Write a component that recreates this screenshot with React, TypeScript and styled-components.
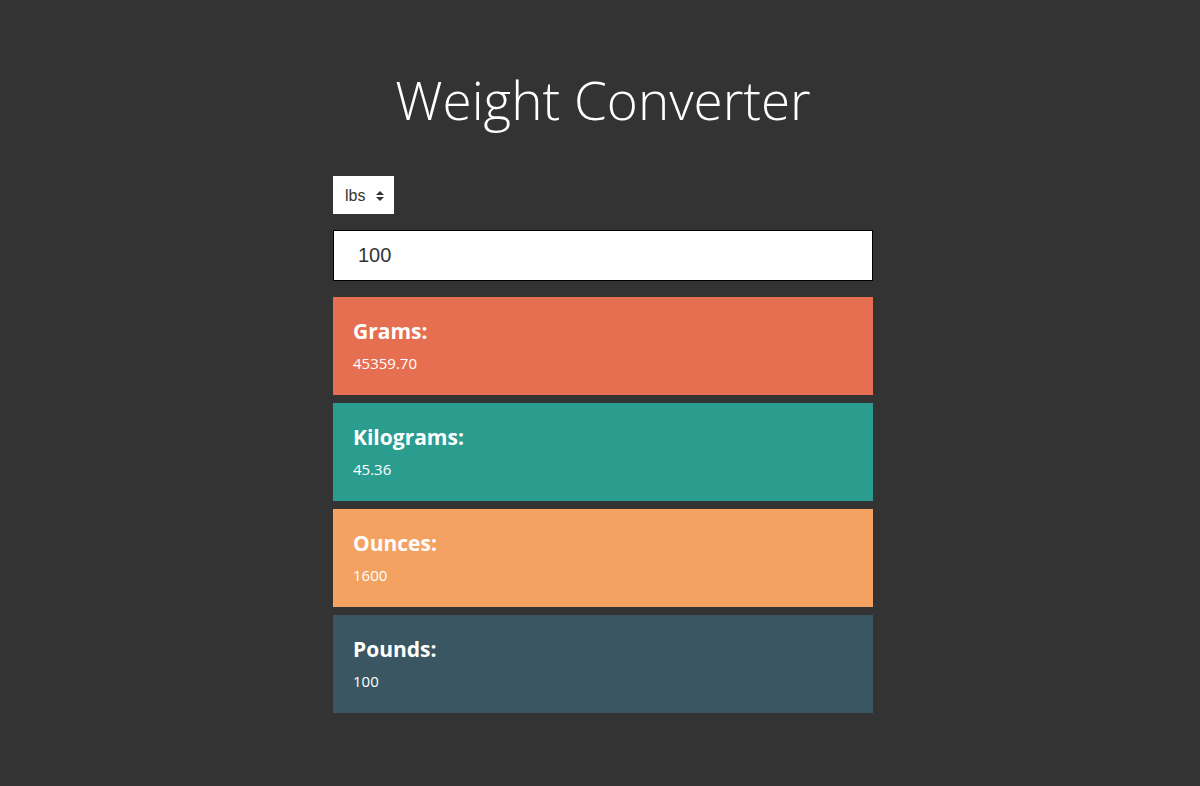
import React, { useState } from "react";
import styled, { createGlobalStyle } from "styled-components";

const Global = createGlobalStyle`
  html, body { margin: 0; padding: 0; background: #333333; }
  body { font-family: "Open Sans", "Noto Sans", sans-serif; color: #fff; }
`;

const Root = styled.div`
  padding-left: 6px;
`;

const Page = styled.div`
  width: 540px;
  margin: 0 auto;
  padding-top: 62px;
  display: flex;
  flex-direction: column;
`;

const Title = styled.h1`
  margin: 0 0 38px;
  text-align: center;
  font-family: "Open Sans", sans-serif;
  font-weight: 300;
  font-size: 53px;
  line-height: 76px;
  color: #fff;
`;

const SelectWrap = styled.div`
  position: relative;
  width: 61px;
  height: 38px;
  background: #fff;
  margin-bottom: 16px;
`;

const Select = styled.select`
  appearance: none;
  width: 100%;
  height: 100%;
  border: none;
  background: transparent;
  padding: 0 0 0 12px;
  font-family: "Liberation Sans", Arial, sans-serif;
  font-size: 16px;
  color: #333;
  outline: none;
`;

const Arrows = styled.svg`
  position: absolute;
  right: 10px;
  top: 15px;
  pointer-events: none;
`;

const Input = styled.input`
  box-sizing: border-box;
  width: 540px;
  height: 51px;
  border: 1px solid #000;
  padding: 0 24px;
  font-family: "Liberation Sans", Arial, sans-serif;
  font-size: 20px;
  color: #333;
  outline: none;
  margin-bottom: 16px;
`;

const Cards = styled.div`
  display: flex;
  flex-direction: column;
  gap: 8px;
`;

const Card = styled.div<{ $bg: string }>`
  box-sizing: border-box;
  height: 98px;
  background: ${(p) => p.$bg};
  padding: 18px 20px;
`;

const CardTitle = styled.h4`
  margin: 0;
  font-family: "Open Sans", sans-serif;
  font-weight: 700;
  font-size: 21px;
  line-height: 32px;
  color: #fff;
`;

const CardValue = styled.div`
  margin-top: 6px;
  font-family: "Open Sans", sans-serif;
  font-size: 15px;
  line-height: 21px;
  color: #fff;
`;

export default function App() {
  const [value, setValue] = useState("100");
  const n = parseFloat(value) || 0;
  const rows = [
    { label: "Grams:", v: (n / 0.0022046).toFixed(2), bg: "#e76f51" },
    { label: "Kilograms:", v: (n / 2.2046).toFixed(2), bg: "#2a9d8f" },
    { label: "Ounces:", v: String(n * 16), bg: "#f4a261" },
    { label: "Pounds:", v: String(n), bg: "#3a5662" },
  ];
  return (
    <>
      <Global />
      <Root>
        <Page>
          <Title>Weight Converter</Title>
          <SelectWrap>
            <Select defaultValue="lbs">
              <option value="lbs">lbs</option>
              <option value="kg">kg</option>
            </Select>
            <Arrows width="8" height="10" viewBox="0 0 8 10">
              <path d="M0 4 L4 0 L8 4 Z M0 6 L4 10 L8 6 Z" fill="#333" />
            </Arrows>
          </SelectWrap>
          <Input value={value} onChange={(e) => setValue(e.target.value)} />
          <Cards>
            {rows.map((r) => (
              <Card key={r.label} $bg={r.bg}>
                <CardTitle>{r.label}</CardTitle>
                <CardValue>{r.v}</CardValue>
              </Card>
            ))}
          </Cards>
        </Page>
      </Root>
    </>
  );
}
